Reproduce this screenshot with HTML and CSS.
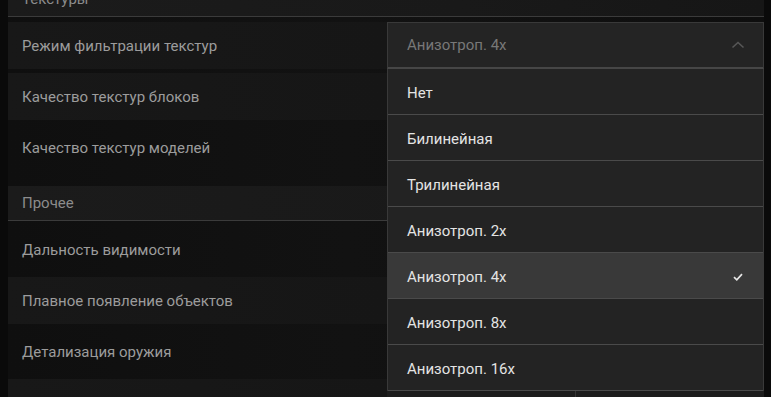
FILE: index.html
```html
<!DOCTYPE html>
<html lang="ru">
<head>
    <meta charset="UTF-8">
    <meta name="viewport" content="width=device-width, initial-scale=1.0">
    <title>Настройки графики</title>
    <link rel="stylesheet" href="styles.css">
</head>
<body>

    <div class="settings">

        <div class="group-title">Текстуры</div>

        <div class="row shaded">
            <span class="label">Режим фильтрации текстур</span>
            <div class="select open">
                <div class="select-value">
                    <span>Анизотроп. 4x</span>
                    <svg class="chevron" width="14" height="8" viewBox="0 0 14 8">
                        <path d="M1.5 6.5 L7 1.5 L12.5 6.5" fill="none" stroke="#575757" stroke-width="1.6"/>
                    </svg>
                </div>
                <ul class="select-menu">
                    <li>Нет</li>
                    <li>Билинейная</li>
                    <li>Трилинейная</li>
                    <li>Анизотроп. 2x</li>
                    <li class="selected">Анизотроп. 4x
                        <svg class="check" width="10" height="8" viewBox="0 0 10 8">
                            <path d="M1 4.2 L3.8 6.8 L9 1.2" fill="none" stroke="#e6e6e6" stroke-width="1.7"/>
                        </svg>
                    </li>
                    <li>Анизотроп. 8x</li>
                    <li>Анизотроп. 16x</li>
                </ul>
            </div>
        </div>

        <div class="row shaded">
            <span class="label">Качество текстур блоков</span>
        </div>

        <div class="row">
            <span class="label">Качество текстур моделей</span>
        </div>

        <div class="group-title spaced">Прочее</div>

        <div class="row">
            <span class="label">Дальность видимости</span>
        </div>

        <div class="row shaded">
            <span class="label">Плавное появление объектов</span>
        </div>

        <div class="row">
            <span class="label">Детализация оружия</span>
        </div>

        <div class="row shaded">
            <span class="label">Динамические тени</span>
            <div class="segmented">
                <span>Откл.</span>
                <span>Вкл.</span>
            </div>
        </div>

    </div>

</body>
</html>
```

FILE: styles.css
```css
body {
    margin: 0;
    background-color: #0a0a0a;
    font-family: 'Roboto', 'Liberation Sans', sans-serif;
    overflow: hidden;
}

.settings {
    margin: -18px 7px 0 8px;
    background: linear-gradient(90deg, #0f0f0f 0%, #121212 45%, #0e0e0e 100%);
    min-height: 440px;
}

.group-title {
    height: 34px;
    line-height: 34px;
    padding-left: 14px;
    font-size: 15px;
    color: #8c8c8c;
    background: linear-gradient(90deg, #1b1b1b 0%, #191919 60%, #161616 100%);
    border-bottom: 1px solid #3b3b3b;
    margin-bottom: 5px;
}

.group-title.spaced {
    margin-top: 15px;
}

.row {
    height: 47px;
    margin-bottom: 4px;
    display: flex;
    align-items: center;
    justify-content: space-between;
    padding-left: 14px;
    position: relative;
}

.row.shaded {
    background: linear-gradient(90deg, #181818 0%, #161616 50%, #131313 100%);
}

.label {
    font-size: 15px;
    color: #9c9c9c;
}

.select {
    width: 377px;
    height: 47px;
    align-self: flex-start;
    position: relative;
    z-index: 5;
}

.select-value {
    box-sizing: border-box;
    height: 47px;
    display: flex;
    align-items: center;
    justify-content: space-between;
    padding: 0 18px 0 19px;
    background-color: #242424;
    border: 1px solid #393939;
    border-bottom: 2px solid #464646;
    font-size: 15px;
    color: #787878;
}

.select-menu {
    position: absolute;
    top: 100%;
    left: 0;
    right: 0;
    margin: 0;
    padding: 0;
    list-style: none;
    background-color: #232323;
    border-left: 1px solid #393939;
    border-right: 1px solid #393939;
}

.select-menu li {
    box-sizing: border-box;
    height: 46px;
    display: flex;
    align-items: center;
    justify-content: space-between;
    padding: 2px 19px 0;
    border-bottom: 1px solid #4a4a4a;
    font-size: 15px;
    color: #e4e4e4;
}

.select-menu li.selected {
    background-color: #393939;
}

.check {
    margin-right: 1px;
}

.segmented {
    width: 377px;
    height: 38px;
    display: flex;
    align-self: flex-end;
    margin-bottom: 2px;
    background-color: #1c1c1c;
}

.segmented span {
    flex: 1;
    display: flex;
    align-items: center;
    justify-content: center;
    font-size: 15px;
    color: #9c9c9c;
}

.segmented span + span {
    border-left: 1px solid #343434;
}
```
